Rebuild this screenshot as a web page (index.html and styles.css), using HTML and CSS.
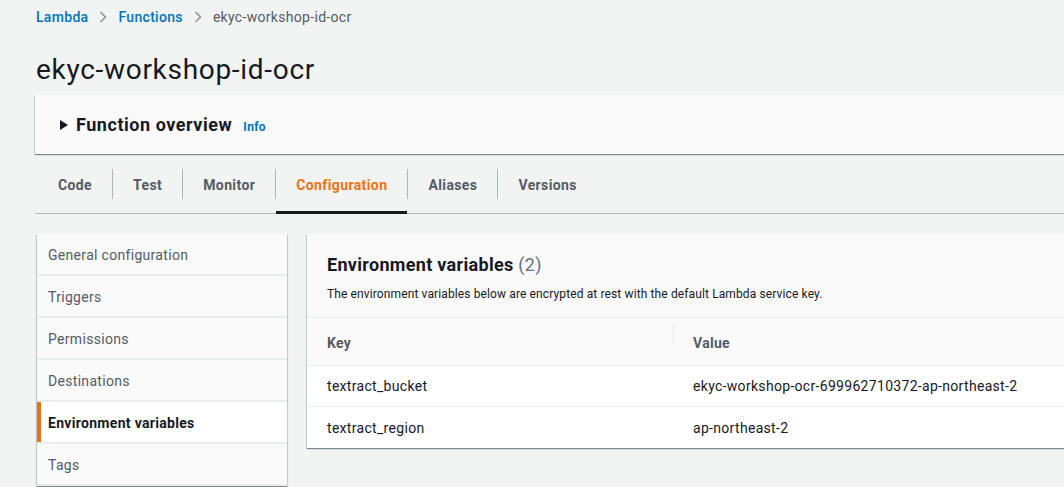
FILE: index.html
```html
<!DOCTYPE html>
<html>
<head>
<meta charset="utf-8">
<link rel="stylesheet" href="styles.css">
</head>
<body>
<div class="page">
  <nav class="crumbs">
    <a class="crumb-link">Lambda</a>
    <svg class="chev" width="8" height="12" viewBox="0 0 8 12"><path d="M1.5 1 L6.5 6 L1.5 11" fill="none" stroke="#879596" stroke-width="1.5"/></svg>
    <a class="crumb-link">Functions</a>
    <svg class="chev" width="8" height="12" viewBox="0 0 8 12"><path d="M1.5 1 L6.5 6 L1.5 11" fill="none" stroke="#879596" stroke-width="1.5"/></svg>
    <span class="crumb-current">ekyc-workshop-id-ocr</span>
  </nav>
  <h1 class="title">ekyc-workshop-id-ocr</h1>

  <section class="overview">
    <svg class="caret" width="8" height="10" viewBox="0 0 8 10"><path d="M0 0 L8 5 L0 10 Z" fill="#16191f"/></svg>
    <span class="overview-title">Function overview</span>
    <span class="info">Info</span>
  </section>

  <div class="tabs">
    <div class="tab">Code</div>
    <div class="tab">Test</div>
    <div class="tab">Monitor</div>
    <div class="tab active">Configuration</div>
    <div class="tab">Aliases</div>
    <div class="tab">Versions</div>
  </div>

  <div class="config">
    <ul class="side">
      <li class="side-item">General configuration</li>
      <li class="side-item">Triggers</li>
      <li class="side-item">Permissions</li>
      <li class="side-item">Destinations</li>
      <li class="side-item selected">Environment variables</li>
      <li class="side-item">Tags</li>
    </ul>

    <section class="panel">
      <div class="panel-head">
        <h2 class="panel-title">Environment variables <span class="count">(2)</span></h2>
        <p class="panel-desc">The environment variables below are encrypted at rest with the default Lambda service key.</p>
      </div>
      <div class="table">
        <div class="row head">
          <div class="cell key">Key</div>
          <div class="cell val"><span class="col-sep"></span>Value</div>
        </div>
        <div class="row">
          <div class="cell key">textract_bucket</div>
          <div class="cell val">ekyc-workshop-ocr-699962710372-ap-northeast-2</div>
        </div>
        <div class="row">
          <div class="cell key">textract_region</div>
          <div class="cell val">ap-northeast-2</div>
        </div>
      </div>
    </section>
  </div>
</div>
</body>
</html>
```

FILE: styles.css
```css
* { box-sizing: border-box; }
html, body { margin: 0; padding: 0; }
body {
  background: #f2f3f3;
  font-family: Roboto, "Liberation Sans", sans-serif;
  color: #16191f;
  font-size: 14px;
  letter-spacing: 0.022em;
  width: 1064px;
  height: 487px;
  overflow: hidden;
}
.page {
  padding-left: 35px;
  width: 1072px;
}
.crumbs {
  display: flex;
  align-items: center;
  height: 20px;
  margin-top: 7px;
  padding-left: 1px;
  font-size: 14px;
  line-height: 20px;
}
.crumb-link { color: #0073bb; font-weight: 500; }
.chev { margin: 0 11px 0 11px; }
.crumb-current { color: #545b64; }
.title {
  margin: 25px 0 0 1px;
  font-size: 28px;
  font-weight: 400;
  line-height: 36px;
  height: 36px;
  letter-spacing: 0.025em;
}
.overview {
  margin-top: 7px;
  height: 59px;
  background: #fafafa;
  box-shadow: 0 1px 1px 0 rgba(0,28,36,.3), 1px 1px 1px 0 rgba(0,28,36,.15), -1px 1px 1px 0 rgba(0,28,36,.15);
  display: flex;
  align-items: center;
  padding-left: 25px;
}
.caret { margin-right: 8px; margin-top: 1px; }
.overview-title { font-size: 18px; font-weight: 700; line-height: 22px; letter-spacing: 0.03em; }
.info { font-size: 12px; font-weight: 700; color: #0073bb; margin-left: 11px; margin-top: 4px; }
.tabs {
  margin-top: 1px;
  height: 59px;
  display: flex;
  align-items: stretch;
  border-bottom: 1px solid #aab7b8;
  padding-left: 2px;
}
.tab {
  position: relative;
  display: flex;
  align-items: center;
  padding: 1px 20px 0 21px;
  font-weight: 700;
  color: #545b64;
  font-size: 14px;
  letter-spacing: 0.028em;
}
.tab + .tab::before {
  content: "";
  position: absolute;
  left: 0;
  top: 14px;
  height: 30px;
  width: 1px;
  background: #aab7b8;
}
.tab.active { color: #ec7211; }
.tab.active::after {
  content: "";
  position: absolute;
  left: 1px;
  right: 0;
  bottom: -1px;
  height: 3px;
  background: #16191f;
}
.config {
  display: flex;
  gap: 20px;
  margin-top: 20px;
  align-items: flex-start;
}
.side {
  list-style: none;
  margin: 0 0 0 2px;
  padding: 0;
  width: 250px;
  background: #eaeded;
  box-shadow: 0 1px 1px 0 rgba(0,28,36,.3), 1px 1px 1px 0 rgba(0,28,36,.15), -1px 1px 1px 0 rgba(0,28,36,.15);
}
.side-item {
  height: 40px;
  margin-bottom: 2px;
  background: #fafafa;
  color: #545b64;
  display: flex;
  align-items: center;
  padding-left: 11px;
  padding-top: 2px;
}
.side-item.selected {
  background: #fff;
  color: #16191f;
  font-weight: 700;
  border-left: 4px solid #ec7211;
  padding-left: 7px;
}
.panel {
  flex: 1;
  background: #fff;
  box-shadow: 0 1px 1px 0 rgba(0,28,36,.3), 1px 1px 1px 0 rgba(0,28,36,.15), -1px 1px 1px 0 rgba(0,28,36,.15);
}
.panel-head {
  background: #fafafa;
  height: 84px;
  padding: 19px 20px 0 20px;
  border-bottom: 1px solid #eaeded;
}
.panel-title {
  margin: 0;
  font-size: 18px;
  line-height: 24px;
  font-weight: 700;
}
.count { font-weight: 400; color: #687078; }
.panel-desc {
  margin: 9px 0 0 0;
  font-size: 12px;
  line-height: 16px;
  color: #16191f;
  letter-spacing: 0.01em;
}
.row {
  display: flex;
  height: 41px;
  border-bottom: 1px solid #eaeded;
  align-items: center;
}
.row.head { background: #fafafa; height: 48px; font-weight: 700; color: #545b64; padding-top: 2px; }
.row:last-child { border-bottom: none; }
.cell { padding-left: 20px; }
.cell.key { width: 366px; }
.cell.val { position: relative; }
.col-sep {
  position: absolute;
  left: 0;
  top: -12px;
  width: 1px;
  height: 25px;
  background: #eaeded;
}
```
